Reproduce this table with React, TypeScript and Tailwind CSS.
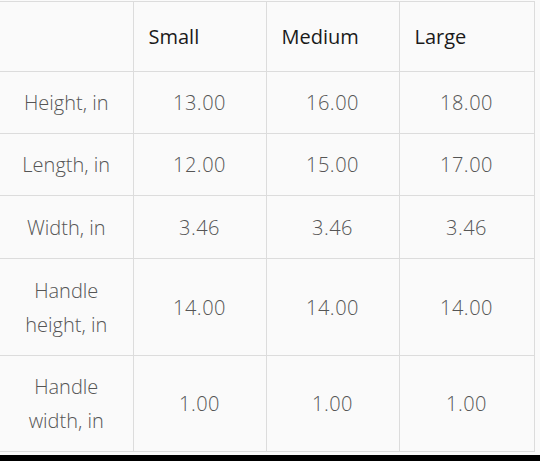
const sizes = ["Small", "Medium", "Large"];

const rows = [
  { label: ["Height, in"], values: ["13.00", "16.00", "18.00"], h: "h-[62px]" },
  { label: ["Length, in"], values: ["12.00", "15.00", "17.00"], h: "h-[62px]" },
  { label: ["Width, in"], values: ["3.46", "3.46", "3.46"], h: "h-[63px]" },
  { label: ["Handle", "height, in"], values: ["14.00", "14.00", "14.00"], h: "h-[97px]" },
  { label: ["Handle", "width, in"], values: ["1.00", "1.00", "1.00"], h: "h-[96px]" },
];

export default function App() {
  return (
    <div className="w-[540px] h-[461px] bg-[#fafafa] flex flex-col font-['Open_Sans','Lato',sans-serif] font-light">
      <div className="pt-px pr-[6px] flex-1">
        <table className="w-[534px] border-collapse table-fixed text-[20px]">
          <colgroup>
            <col className="w-[133px]" />
            <col className="w-[133px]" />
            <col className="w-[133px]" />
            <col className="w-[135px]" />
          </colgroup>
          <thead>
            <tr className="h-[70px]">
              <th className="border-t border-b border-[#dcdcdc]"></th>
              {sizes.map((s) => (
                <th
                  key={s}
                  className="border border-[#dcdcdc] text-left font-normal text-[#1a1a1a] pl-[15px]"
                >
                  {s}
                </th>
              ))}
            </tr>
          </thead>
          <tbody>
            {rows.map((r) => (
              <tr key={r.label.join(" ")} className={r.h}>
                <td className="border-t border-b border-r border-[#dcdcdc] text-center text-[#555] leading-[34px] pt-px">
                  {r.label.map((l) => (
                    <div key={l}>{l}</div>
                  ))}
                </td>
                {r.values.map((v, i) => (
                  <td key={i} className="border border-[#dcdcdc] text-center text-[#555] tracking-[0.5px] pt-px">
                    {v}
                  </td>
                ))}
              </tr>
            ))}
          </tbody>
        </table>
      </div>
      <div className="h-[6px] bg-black"></div>
    </div>
  );
}
